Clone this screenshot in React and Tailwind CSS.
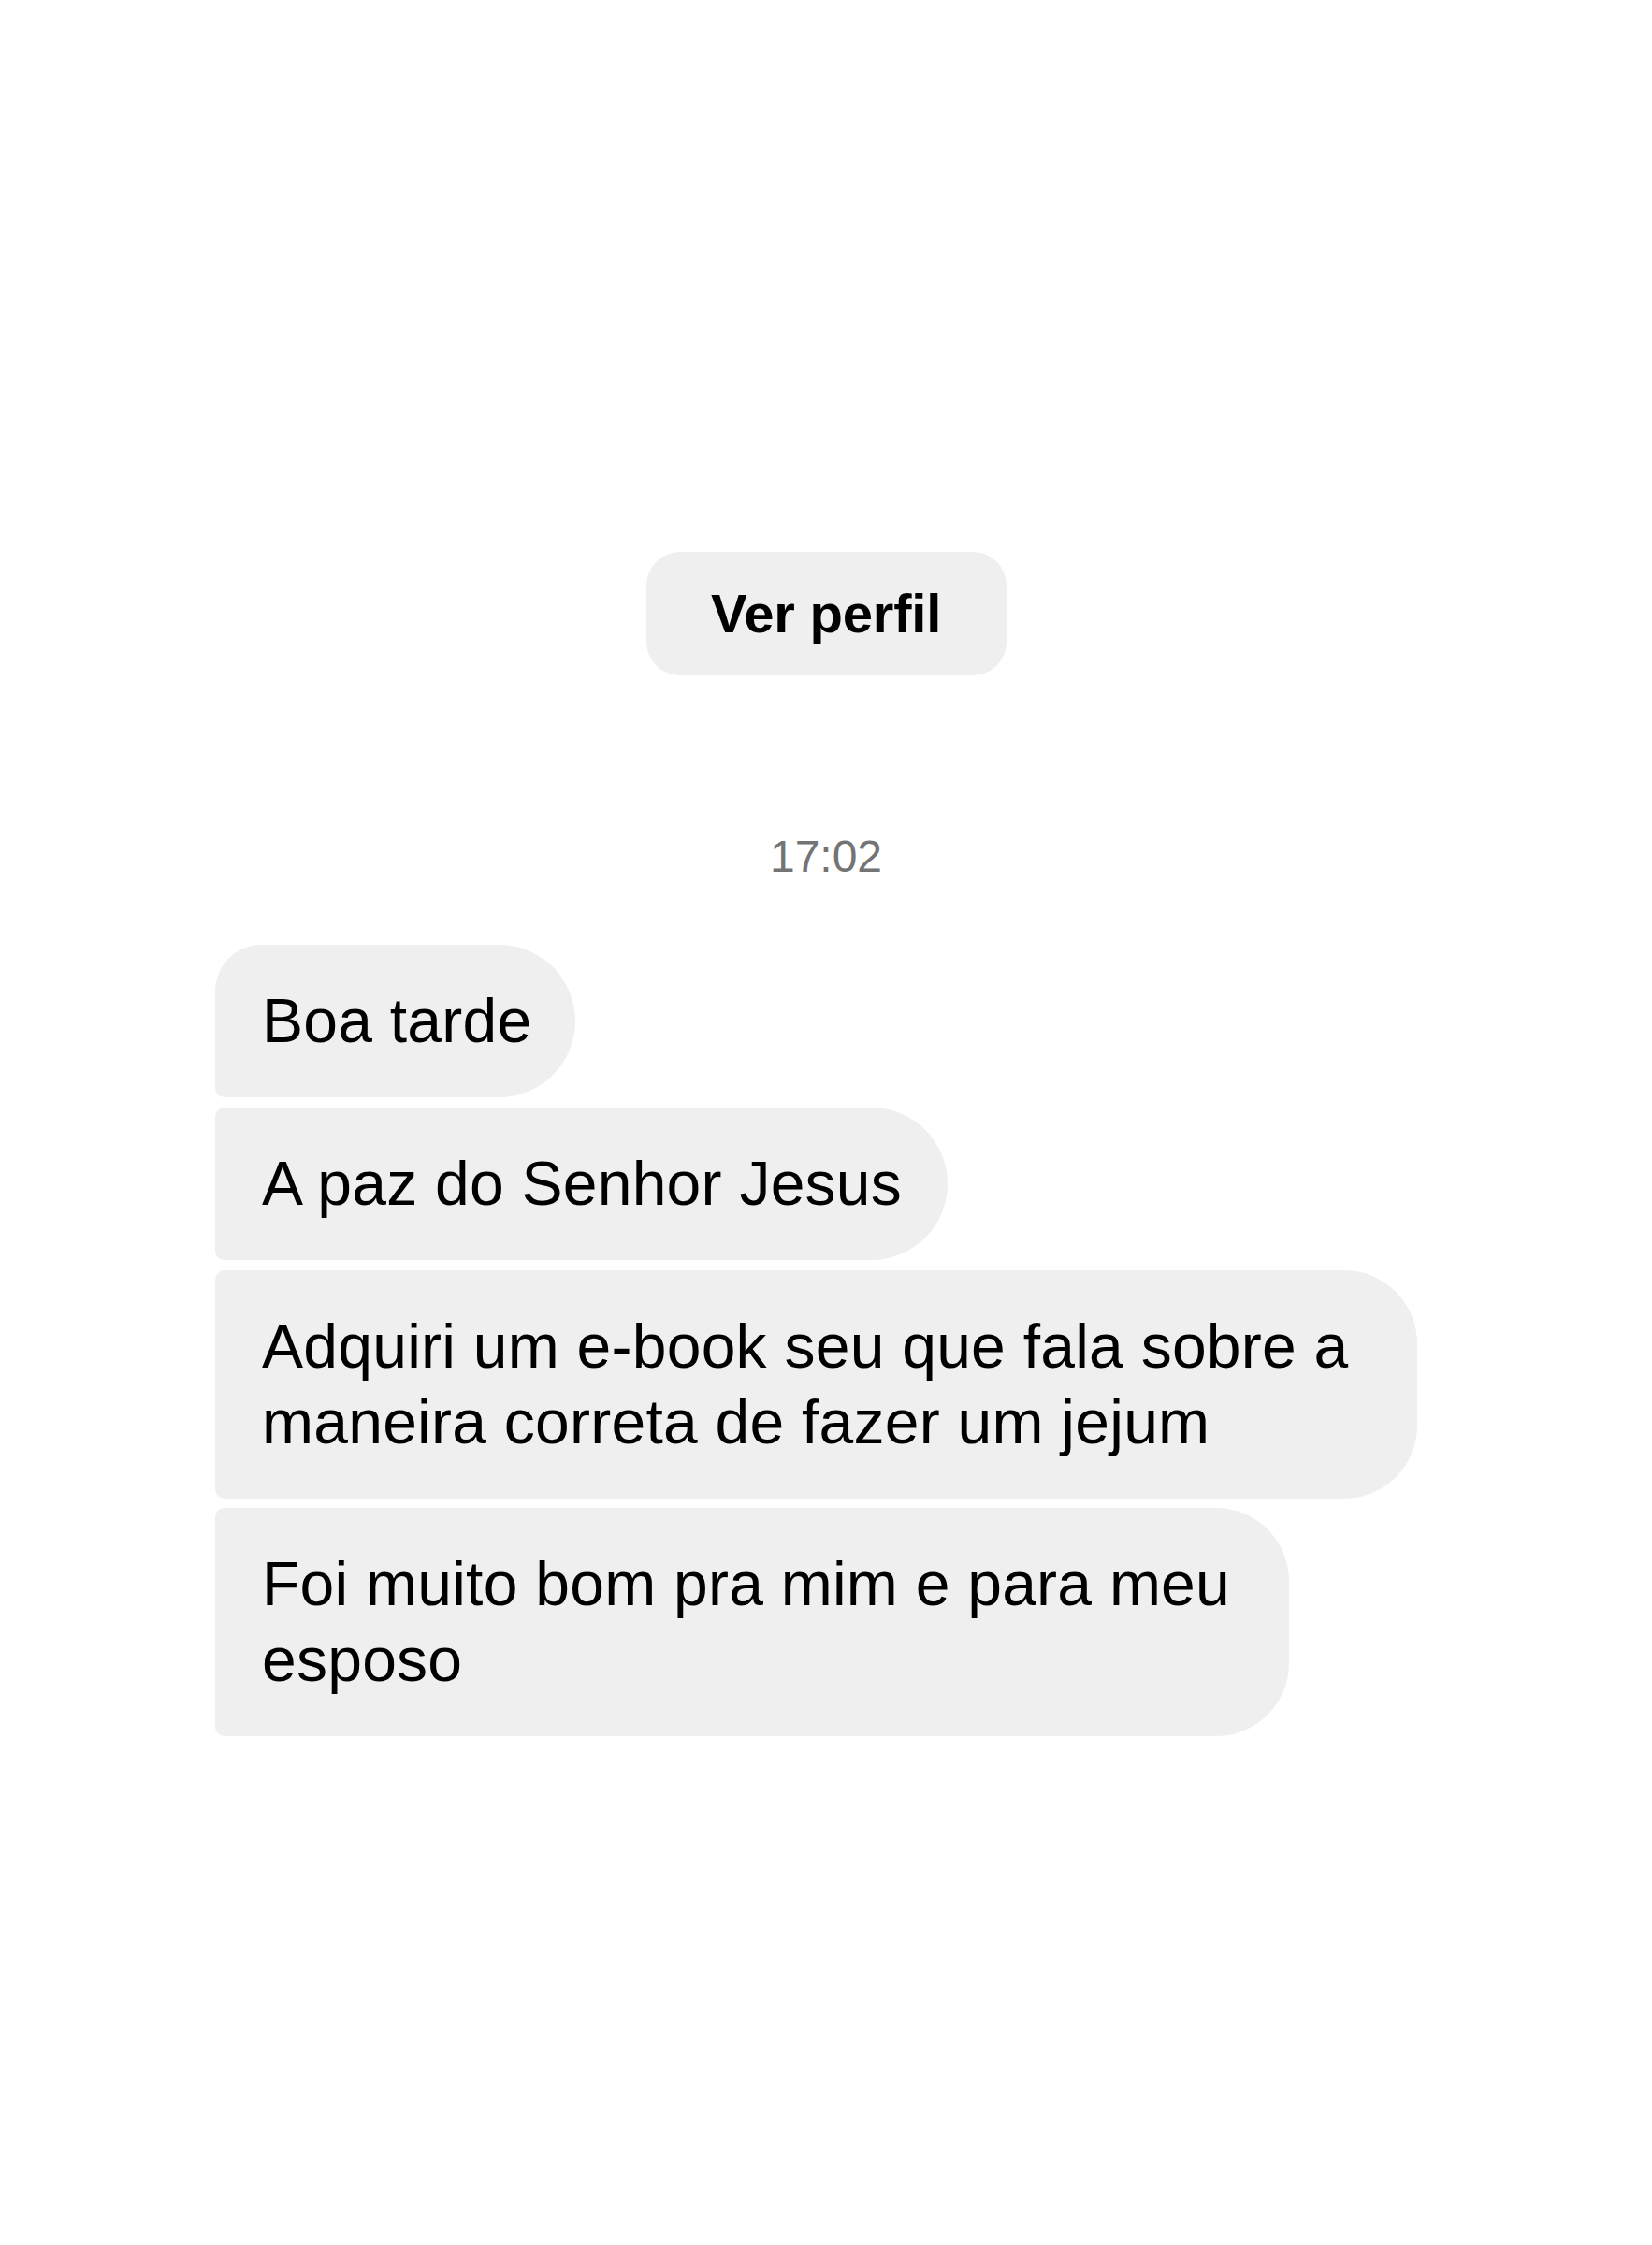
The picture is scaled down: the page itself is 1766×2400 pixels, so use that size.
export default function App() {
  const font = { fontFamily: '"Liberation Sans", Arial, Helvetica, sans-serif' };
  return (
    <div
      className="w-[1766px] h-[2400px] bg-white flex flex-col items-center pt-[590px] text-black"
      style={font}
    >
      <div className="w-[385px] h-[132px] rounded-[36px] bg-[#efefef] flex items-center justify-center">
        <span className="text-[58px] leading-[58px] font-bold tracking-[-0.2px]">Ver perfil</span>
      </div>

      <div className="mt-[166px] text-[48px] leading-[56px] text-[#747474]">17:02</div>

      <div className="mt-[66px] self-stretch pl-[230px] flex flex-col items-start gap-[10px] tracking-[0.25px]">
        <div className="w-[385px] bg-[#efefef] rounded-tl-[50px] rounded-bl-[10px] rounded-r-[82px] pl-[50px] py-[41px] text-[66px] leading-[81px] whitespace-nowrap">
          Boa tarde
        </div>
        <div className="w-[783px] bg-[#efefef] rounded-l-[10px] rounded-r-[82px] pl-[50px] py-[41px] text-[66px] leading-[81px] whitespace-nowrap mt-[1px]">
          A paz do Senhor Jesus
        </div>
        <div className="w-[1285px] bg-[#efefef] rounded-l-[10px] rounded-r-[78px] pl-[50px] py-[41px] text-[66px] leading-[81px] whitespace-nowrap mt-[1px]">
          <div>Adquiri um e-book seu que fala sobre a</div>
          <div>maneira correta de fazer um jejum</div>
        </div>
        <div className="w-[1148px] bg-[#efefef] rounded-l-[10px] rounded-r-[78px] pl-[50px] py-[41px] text-[66px] leading-[81px] whitespace-nowrap">
          <div>Foi muito bom pra mim e para meu</div>
          <div>esposo</div>
        </div>
      </div>
    </div>
  );
}
